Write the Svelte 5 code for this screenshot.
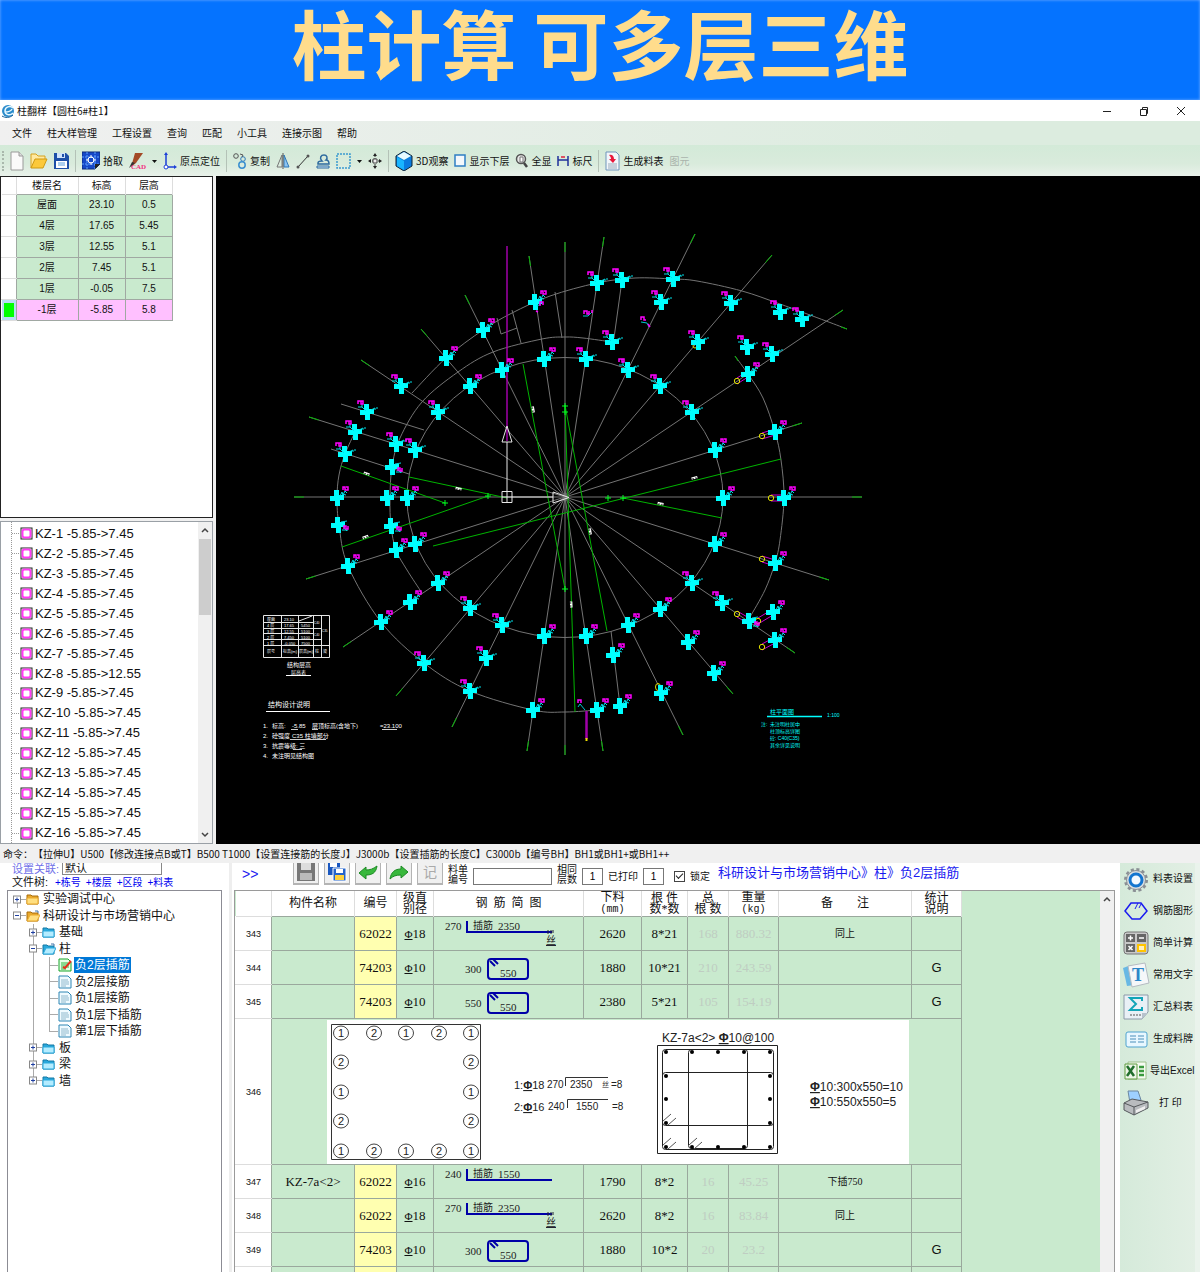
<script lang="ts">
    type Pt = [number, number];

    const menus = ['文件', '柱大样管理', '工程设置', '查询', '匹配', '小工具', '连接示图', '帮助'];

    const tools = [
        { icon: 'new', w: 14 },
        { icon: 'open', w: 18 },
        { icon: 'save', w: 15 },
        { icon: 'sep' },
        { icon: 'pick', w: 18, label: '拾取' },
        { icon: 'cad', w: 17 },
        { icon: 'caret', w: 5 },
        { icon: 'origin', w: 14, label: '原点定位' },
        { icon: 'sep' },
        { icon: 'copy', w: 14, label: '复制' },
        { icon: 'mirror', w: 14 },
        { icon: 'line', w: 14 },
        { icon: 'stamp', w: 14 },
        { icon: 'dash', w: 15 },
        { icon: 'caret', w: 5 },
        { icon: 'move', w: 14 },
        { icon: 'sep' },
        { icon: 'cube', w: 18, label: '3D观察' },
        { icon: 'box', w: 12, label: '显示下层' },
        { icon: 'zoom', w: 13, label: '全显' },
        { icon: 'ruler', w: 12, label: '标尺' },
        { icon: 'sep' },
        { icon: 'sheet', w: 15, label: '生成料表' },
        { icon: '', label: '图元', off: true }
    ];

    const floors = [
        ['屋面', '23.10', '0.5'],
        ['4层', '17.65', '5.45'],
        ['3层', '12.55', '5.1'],
        ['2层', '7.45', '5.1'],
        ['1层', '-0.05', '7.5'],
        ['-1层', '-5.85', '5.8']
    ];

    const columns = Array.from({ length: 16 }, (_, i) => `KZ-${i + 1} -5.85->${i === 7 ? '12.55' : '7.45'}`);

    const commands = [
        '命令：', '【拉伸U】', 'U500', '【修改连接点B或T】', 'B500 T1000', '【设置连接筋的长度J】', 'J3000b',
        '【设置插筋的长度C】', 'C3000b', '【编号BH】', 'BH1或BH1+或BH1++'
    ];

    const tree = [
        { d: 0, t: '实验调试中心', icon: 'folder', open: false },
        { d: 0, t: '科研设计与市场营销中心', icon: 'folder', open: true },
        { d: 1, t: '基础', icon: 'blue', open: false },
        { d: 1, t: '柱', icon: 'blue', open: true },
        { d: 2, t: '负2层插筋', icon: 'edit', open: false },
        { d: 2, t: '负2层接筋', icon: 'doc', open: false },
        { d: 2, t: '负1层接筋', icon: 'doc', open: false },
        { d: 2, t: '负1层下插筋', icon: 'doc', open: false },
        { d: 2, t: '第1层下插筋', icon: 'doc', open: false },
        { d: 1, t: '板', icon: 'blue', open: false },
        { d: 1, t: '梁', icon: 'blue', open: false },
        { d: 1, t: '墙', icon: 'blue', open: false }
    ];
    let selected = $state(4);
    let locked = $state(true);

    const rows = [
        { n: 343, name: '', code: '62022', dia: '18', a: '270', b: '2350', kind: 'L', thread: true, len: '2620', cnt: '8*21', sum: '168', kg: '880.32', note: '同上', g: '' },
        { n: 344, name: '', code: '74203', dia: '10', a: '300', b: '550', kind: 'O', len: '1880', cnt: '10*21', sum: '210', kg: '243.59', note: '', g: 'G' },
        { n: 345, name: '', code: '74203', dia: '10', a: '550', b: '550', kind: 'O', len: '2380', cnt: '5*21', sum: '105', kg: '154.19', note: '', g: 'G' },
        { n: 346, kind: 'pic' },
        { n: 347, name: 'KZ-7a<2>', code: '62022', dia: '16', a: '240', b: '1550', kind: 'L', len: '1790', cnt: '8*2', sum: '16', kg: '45.25', note: '下插750', g: '' },
        { n: 348, name: '', code: '62022', dia: '18', a: '270', b: '2350', kind: 'L', thread: true, len: '2620', cnt: '8*2', sum: '16', kg: '83.84', note: '同上', g: '' },
        { n: 349, name: '', code: '74203', dia: '10', a: '300', b: '550', kind: 'O', len: '1880', cnt: '10*2', sum: '20', kg: '23.2', note: '', g: 'G' },
        { n: '', name: '', code: '', dia: '', a: '', b: '', kind: 'O', len: '', cnt: '', sum: '', kg: '', note: '', g: '' }
    ];

    const side = [
        ['gear', '料表设置'], ['shape', '钢筋图形'], ['calc', '简单计算'], ['text', '常用文字'],
        ['sigma', '汇总料表'], ['card', '生成料牌'], ['excel', '导出Excel'], ['print', '打 印']
    ];

    // ---- drawing ----
    const cx = 565;
    const cy = 497;
    const rays: Pt[] = [
        [565, 242], [565, 755], [294, 497], [862, 497], [529, 256], [603, 751], [465, 295], [683, 735],
        [421, 329], [733, 694], [361, 360], [795, 653], [309, 417], [829, 580], [306, 579], [802, 423],
        [343, 647], [843, 310], [396, 696], [772, 255], [452, 727], [695, 234], [527, 751], [604, 237]
    ];
    function tip([x, y]: Pt): Pt {
        const l = Math.hypot(x - cx, y - cy);
        return [x - ((x - cx) / l) * 10, y - ((y - cy) / l) * 10];
    }

    // smooth curve through a list of points
    function curve(p: Pt[]) {
        let d = `M${p[0]}`;
        for (let i = 0; i < p.length - 1; i++) {
            const a = p[i - 1] ?? p[i], b = p[i], c = p[i + 1], e = p[i + 2] ?? c;
            d += `C${b[0] + (c[0] - a[0]) / 6},${b[1] + (c[1] - a[1]) / 6} ${c[0] - (e[0] - b[0]) / 6},${c[1] - (e[1] - b[1]) / 6} ${c}`;
        }
        return d;
    }
    const arcs: Pt[][] = [
        [[355, 432], [345, 454], [339, 475], [337, 498], [339, 525], [348, 566], [381, 622], [424, 663], [470, 691], [533, 710], [565, 712], [597, 710]],
        [[422, 593], [407, 570], [396, 550], [391, 526], [390, 498], [392, 467], [400, 438], [422, 402], [458, 372], [493, 352], [542, 339], [565, 337], [583, 338], [612, 342]],
        [[412, 393], [446, 358], [483, 330], [512, 313], [550, 296], [597, 283], [635, 278], [673, 279], [697, 281], [742, 291], [780, 304], [826, 321], [847, 329]],
        [[735, 356], [748, 374], [763, 398], [775, 432], [781, 460], [784, 498], [780, 540], [775, 563], [765, 590], [750, 617]]
    ];
    const grays = [
        [341, 404, 424, 430], [331, 449, 409, 474], [555, 292, 562, 338], [512, 310, 521, 343],
        [497, 318, 501, 334], [501, 334, 517, 328], [622, 280, 614, 338], [611, 631, 620, 706]
    ];
    const greens = [
        [523, 364, 565, 589], [565, 405, 607, 631], [565, 405, 575, 712], [341, 466, 445, 503],
        [409, 477, 507, 498], [342, 547, 488, 496], [433, 546, 781, 459], [623, 498, 722, 518],
        [735, 356, 738, 361], [841, 327, 847, 329]
    ];
    const plus: Pt[] = [[445, 503], [488, 496], [608, 498], [623, 498], [565, 406], [565, 412], [565, 589]];
    const marks: [number, number, number][] = [
        [367, 474, 20], [459, 489, 12], [533, 410, 80], [695, 478, -14], [661, 504, 12], [366, 537, -20], [571, 605, 88], [590, 532, 80]
    ];
    const ne: Pt[] = [
        [535, 302], [483, 330], [446, 358], [544, 359], [502, 370], [470, 386], [337, 498], [387, 498], [407, 498],
        [748, 374], [775, 432], [715, 450], [723, 498], [784, 498], [415, 544], [396, 550], [348, 566], [438, 583],
        [410, 602], [381, 622], [544, 636], [533, 710], [715, 544], [775, 563], [773, 612], [775, 640], [660, 609],
        [628, 625], [688, 642], [714, 673], [586, 636], [613, 655], [661, 693], [597, 710], [620, 706]
    ];
    const nw: Pt[] = [
        [401, 386], [438, 412], [367, 412], [355, 432], [345, 454], [396, 444], [415, 450], [597, 283], [622, 280],
        [673, 279], [661, 302], [731, 303], [780, 312], [802, 319], [612, 342], [698, 342], [747, 347], [772, 354],
        [586, 359], [628, 370], [660, 386], [692, 412], [470, 608], [502, 625], [424, 663], [486, 658], [470, 691],
        [692, 583], [722, 603]
    ];
    const se: Pt[] = [[392, 467], [338, 525], [391, 526], [749, 621]];
    const links = [
        [737, 381, 748, 374], [762, 436, 775, 432], [771, 498, 784, 498], [762, 559, 775, 563],
        [737, 614, 749, 621], [758, 621, 773, 612], [762, 647, 775, 640]
    ];
    const cross = 'M-3-8h5v5h5v5h-4v6h-5v-5h-5v-5h4z';

    const ringX = [340, 373, 405, 438, 470];
    const ringY = [1032, 1061, 1091, 1120, 1150];
    const dotX = [665, 691, 717, 743, 769];
    const dotY = [1051, 1075, 1098, 1122, 1146];
    const edge = [0, 1, 2, 3, 4].flatMap((i) => [0, 1, 2, 3, 4].map((j) => [i, j])).filter(([i, j]) => i % 4 === 0 || j % 4 === 0);
</script>

{#snippet toolIcon(name: string, w: number)}
    <svg width={w} height="20" viewBox="0 0 {w} 20" fill="none" aria-hidden="true">
        {#if name === 'new'}
            <path d="M1 1h8l4 4v14H1z" fill="#fafafa" stroke="#9a9a9a" /><path d="M9 1v4h4" stroke="#9a9a9a" fill="#ddd" />
        {:else if name === 'open'}
            <path d="M1 17V3h5l2 2h7v3" fill="#ffe9a0" stroke="#d6a21c" /><path d="M1 17 5 8h12l-4 9z" fill="#fcc93a" stroke="#cf9a12" />
        {:else if name === 'save'}
            <path d="M0 2h12l3 3v13H0z" fill="#1d4fa8" /><path d="M3 2h8v5H3z" fill="#cfe2fa" /><path d="M8 3h2v3H8z" fill="#1d4fa8" /><path d="M2 10h11v7H2z" fill="#fff" /><path d="M4 12h7M4 14h7" stroke="#5ba0e0" />
        {:else if name === 'pick'}
            <path d="M0 1h18v12l-5 5H0z" fill="#1648c8" stroke="#0b2a7a" /><path d="M0 6h18M0 13h18M5 1v17M13 1v17" stroke="#5ea2ff" stroke-dasharray="2 1" /><circle cx="9" cy="9" r="3" stroke="#fff" /><path d="M9 4v3M9 11v3M4 9h3M11 9h3" stroke="#fff" /><path d="M18 13h-5v5z" fill="#222" />
        {:else if name === 'cad'}
            <path d="M6 2h8L7 12l-5 4z" fill="#a34a26" /><path d="m0 17 3-6 3 1z" fill="#333" /><text x="2" y="18" font-size="7" class="cadword">CAD</text>
        {:else if name === 'caret'}
            <path d="M0 9h5l-2.500 3z" fill="#111" />
        {:else if name === 'origin'}
            <path d="M3 3v13h9" stroke="#1d3fd8" stroke-width="1.500" /><path d="m1 4 2-3 2 3zM11 14l3 2-3 2z" fill="#1d3fd8" /><circle cx="3" cy="16" r="2" fill="#fff" stroke="#1d3fd8" />
        {:else if name === 'copy'}
            <circle cx="3" cy="5" r="2.300" stroke="#555" /><circle cx="10" cy="8" r="2.300" stroke="#2d78b8" /><circle cx="9" cy="14" r="3.200" stroke="#3a8fd0" stroke-width="1.500" /><path d="M7 3l3 1-1 2" stroke="#555" />
        {:else if name === 'mirror'}
            <path d="M6 4v12H1z" stroke="#777" /><path d="M8 4v12h5z" fill="#8cc4f0" stroke="#2d78b8" /><path d="M7 2v16" stroke="#555" />
        {:else if name === 'line'}
            <path d="M2 16 12 5" stroke="#333" /><circle cx="2" cy="16" r="1.500" fill="#555" /><circle cx="12" cy="5" r="1.500" fill="#555" />
        {:else if name === 'stamp'}
            <path d="M1 15h12v2H1z" fill="#cfe6f8" stroke="#2d6a9e" /><path d="M2 12c0-2 2-2 4-2-3-3-1-6 2-6s4 3 2 5c3 0 3 3 3 4H2z" stroke="#2d6a9e" stroke-width="1.500" />
        {:else if name === 'dash'}
            <path d="M1 3h13v14H1z" stroke="#3b9bd0" stroke-width="1.500" stroke-dasharray="2 1" />
        {:else if name === 'move'}
            <path d="M7 4v12M1 10h12" stroke="#333" stroke-dasharray="2 1" /><path d="m5 5 2-3 2 3zM5 15l2 3 2-3zM3 8l-3 2 3 2zM11 8l3 2-3 2z" fill="#222" /><path d="M5 8h4v4H5z" stroke="#444" fill="#eee" />
        {:else if name === 'cube'}
            <path d="m9 0 8 5v10l-8 5-8-5V5z" fill="#0a7fd8" stroke="#123" /><path d="m9 1 7 4-7 4-7-4z" fill="#e6faff" /><path d="M2 6l7 4v9l-7-4z" fill="#19b5ff" /><path d="M16 6l-7 4v9l7-4z" fill="#0b7be0" />
        {:else if name === 'box'}
            <rect x="1" y="4" width="10" height="11" fill="#f4f8fc" stroke="#2f7fc4" stroke-width="1.500" />
        {:else if name === 'zoom'}
            <circle cx="6" cy="8" r="4.500" fill="#e8e8e8" stroke="#555" stroke-width="1.500" /><path d="M5 6h3v5H5z" fill="#fff" stroke="#777" /><path d="m9 12 3 4" stroke="#444" stroke-width="2.500" />
        {:else if name === 'ruler'}
            <path d="M1 5v10M11 5v10M1 9h10" stroke="#20309a" stroke-width="1.500" /><path d="M4 6h4" stroke="#e0203a" stroke-width="1.500" />
        {:else if name === 'sheet'}
            <path d="M1 1h10l3 3v15H1z" fill="#f2f6fa" stroke="#6f95bb" /><path d="M3 13h9M3 15h9M3 17h9" stroke="#9ab" /><path d="M4 4c3-1 5 1 5 4h2l-3 4-4-4h2c0-2-1-3-2-4z" fill="#e8173b" />
        {/if}
    </svg>
{/snippet}

{#snippet treeIcon(name: string, open: boolean)}
    <svg width="14" height="14" viewBox="0 0 14 14" fill="none" aria-hidden="true">
        {#if name === 'folder' || name === 'blue'}
            {@const c = name === 'folder' ? ['#e9a92c', '#ffdf80', '#a86c0a'] : ['#29a8dc', '#b4ecff', '#1478a4']}
            <path d="M1 12V3h4l1 1h6v8z" fill={c[0]} stroke={c[2]} />
            <path d={open ? 'M1 12l3-6h10l-3 6z' : 'M1 6h11v6H1z'} fill={c[1]} stroke={c[0]} />
            {#if open}<path d="M9 2h3v2" stroke="#47a" />{/if}
        {:else}
            <path d="M1 1h9l3 3v9H1z" fill={name === 'edit' ? '#e6ffe6' : '#effaff'} stroke={name === 'edit' ? '#19a52b' : '#2e86b4'} />
            <path d="M3 5h7M3 7h8M3 9h8M3 11h5" stroke={name === 'edit' ? '#2bb53b' : '#8fb8cc'} />
            {#if name === 'edit'}<path d="m5 9 2 1 6-7" stroke="#e4301c" stroke-width="2" />{/if}
        {/if}
    </svg>
{/snippet}

{#snippet sideIcon(name: string)}
    <svg width="28" height="26" viewBox="0 0 28 26" fill="none" aria-hidden="true">
        {#if name === 'gear'}
            <circle cx="14" cy="14" r="10.500" stroke="#8a8f94" stroke-width="3" stroke-dasharray="3 2.500" /><circle cx="14" cy="14" r="9.500" fill="#d9dde0" stroke="#8c9196" /><circle cx="14" cy="14" r="6" fill="#f4f9ff" stroke="#1475cf" stroke-width="3" />
        {:else if name === 'shape'}
            <path d="m3 13 6-8h10l6 8-7 8H10z" stroke="#1a1af0" stroke-width="1.500" /><path d="m13 11 3-6M17 10l2-4" stroke="#1a1af0" />
        {:else if name === 'calc'}
            <rect x="2" y="2" width="24" height="22" rx="3" fill="#c8c8c8" stroke="#777" /><path d="M4 4h9v8H4zM15 4h9v8h-9zM4 14h9v8H4z" fill="#666" /><path d="M15 14h9v8h-9z" fill="#ffc400" /><path d="M6 8h5M8.500 5.500v5M17 8h5M6.500 16l4 4M10.500 16l-4 4M17 17h5M17 19h5" stroke="#fff" stroke-width="1.500" />
        {:else if name === 'text'}
            <path d="m1 6 8-3 4 20-8 1z" fill="#68b8e4" /><path d="m6 4 17-3 4 20-17 4z" fill="#f5f7f9" stroke="#b5bcc2" /><text x="10" y="19" font-size="18" class="bigt">T</text>
        {:else if name === 'sigma'}
            <path d="M2 1h24v17l-6 7H2z" fill="#e9f0f6" stroke="#8c9aa8" /><path d="M20 25v-6h6z" fill="#b6c2cc" /><path d="M20 7V4H8l6 6-6 6h12v-3" stroke="#12a5b8" stroke-width="2" /><path d="M8 21h11" stroke="#555" stroke-dasharray="2 1" />
        {:else if name === 'card'}
            <rect x="4" y="6" width="21" height="15" rx="2" fill="#e8f7ff" stroke="#4ea3cf" /><path d="M8 10h6M16 10h6M8 13h6M16 13h6M8 16h6M16 16h6" stroke="#4b8fba" />
        {:else if name === 'excel'}
            <path d="M6 4h18v17H6z" fill="#f6fbf2" stroke="#9cc08a" /><path d="M3 6h12v15H3z" fill="#eef6e8" stroke="#5f9c3e" /><path d="m5 8 7 10M12 8 5 18" stroke="#206e2c" stroke-width="2.500" /><path d="M17 9h5M17 13h5M17 17h5" stroke="#3a9a3e" stroke-width="2.500" />
        {:else}
            <path d="M6 1h10l3 9-11 3z" fill="#9ed0ff" stroke="#6d87a0" /><path d="m2 13 8-4 16 3v6l-14 7-10-5z" fill="#b9bcbf" stroke="#55595c" /><path d="m2 13 10 4 14-5M12 17v8" stroke="#55595c" /><path d="m14 20 9-4v3l-9 4z" fill="#eee" />
        {/if}
    </svg>
{/snippet}

{#snippet arrow(up: boolean)}
    <svg width="8" height="6" viewBox="0 0 8 6" fill="none" aria-hidden="true"><path d={up ? 'M1 5l3-3 3 3' : 'M1 1l3 3 3-3'} stroke="#444" stroke-width="1.500" /></svg>
{/snippet}

<div class="page">
    <h1 class="banner">柱计算 可多层三维</h1>

    <header class="titlebar">
        <svg width="14" height="14" viewBox="0 0 14 14" fill="none" aria-hidden="true"><circle cx="7" cy="7" r="6" fill="#2b8ccc" /><path d="M12 4c-3-3-8-1-8 3s5 5 8 2M4 8c3 0 6-1 7-3" stroke="#e8f8ff" stroke-width="1.500" /><path d="M1 12c3 2 8 2 11-1" stroke="#0c5a94" /></svg>
        <span class="title">柱翻样【圆柱6#柱1】</span>
        <div class="win">
            <button aria-label="最小化"><svg width="10" height="10" fill="none"><path d="M1 5.500h8" stroke="#222" /></svg></button>
            <button aria-label="还原"><svg width="10" height="10" fill="none"><path d="M1.500 3.500h6v6h-6zM3.500 3V1.500h5v6H8" stroke="#222" /></svg></button>
            <button aria-label="关闭"><svg width="10" height="10" fill="none"><path d="m1 1 8 8M9 1 1 9" stroke="#222" /></svg></button>
        </div>
    </header>

    <nav class="menubar">
        {#each menus as m}<button>{m}</button>{/each}
    </nav>

    <div class="toolbar">
        <i class="grip"></i>
        {#each tools as t}
            {#if t.icon === 'sep'}
                <i class="sep"></i>
            {:else}
                <button class:off={t.off} aria-label={t.label ?? t.icon}>
                    {#if t.w}{@render toolIcon(t.icon, t.w)}{/if}
                    {#if t.label}<span>{t.label}</span>{/if}
                </button>
            {/if}
        {/each}
    </div>

    <div class="work">
        <aside class="left">
            <div class="floors">
                <table>
                    <thead><tr><th></th><th>楼层名</th><th>标高</th><th>层高</th></tr></thead>
                    <tbody>
                        {#each floors as f, i}
                            <tr class:current={i === 5}><td class="mark"></td><td>{f[0]}</td><td>{f[1]}</td><td>{f[2]}</td></tr>
                        {/each}
                    </tbody>
                </table>
            </div>
            <div class="columns">
                <ul>
                    {#each columns as c}
                        <li>
                            <svg width="22" height="13" viewBox="0 0 22 13" fill="none" aria-hidden="true"><path d="M0 6.500h8" stroke="#999" stroke-dasharray="1 1" /><rect x="9" y="1" width="11" height="11" fill="#fff" stroke="#222" /><rect x="10.500" y="2.500" width="8" height="8" rx="2" stroke="#ff3cf4" stroke-width="2" fill="#fff" /></svg>
                            <span>{c}</span>
                        </li>
                    {/each}
                </ul>
                <div class="scroll">
                    {@render arrow(true)}
                    <i class="thumb"></i>
                    {@render arrow(false)}
                </div>
            </div>
        </aside>

        <main class="canvas">
            <svg viewBox="216 176 984 668" fill="none" role="img" aria-label="柱平面图">
                <g stroke="#747474">
                    {#each rays as r}<path d="M{cx} {cy}L{r}" />{/each}
                    {#each arcs as a}<path d={curve(a)} />{/each}
                    <ellipse cx="565" cy="497.500" rx="158" ry="140" />
                    {#each grays as l}<path d="M{l[0]} {l[1]}L{l[2]} {l[3]}" />{/each}
                </g>
                <g stroke="#00b400">
                    {#each rays as r}<path d="M{tip(r)}L{r}" />{/each}
                    {#each greens as l}<path d="M{l[0]} {l[1]}L{l[2]} {l[3]}" />{/each}
                    {#each plus as p}<path d="M{p[0] - 3} {p[1]}h6m-3-3v6" stroke="#00ff20" />{/each}
                </g>
                {#each marks as m}
                    <path d="M-3 1v-2h2v2m1 0v-2h2v2" transform="translate({m[0]} {m[1]}) rotate({m[2]})" stroke="#fff" />
                {/each}

                <path d="M507 246v195" stroke="#a000a8" stroke-width="1.500" />
                <path d="M507 442v49m5 6h41M507 426l-5 16h10zM502 491.500h10v11h-10zM553 492v11l16-5.500zM507 491v12m-5-6h10" stroke="#e8e8e8" />

                {#each links as l}
                    <path d="M{l[0]} {l[1] - 3}L{l[2]} {l[3] - 3}M{l[0]} {l[1] + 3}L{l[2]} {l[3] + 3}" stroke="#c800d0" />
                    <circle cx={l[0]} cy={l[1]} r="2.700" stroke="#e0e000" />
                {/each}
                <circle cx="695" cy="346" r="2" stroke="#e0e000" />
                <ellipse cx="658" cy="687" rx="2.500" ry="3.500" stroke="#e0e000" />
                <path d="M586.500 711v28" stroke="#a000a8" stroke-width="2.500" /><path d="M586.500 738v3" stroke="#f0e000" stroke-width="2" />

                {#each ne as p}
                    <g transform="translate({p})">
                        <path d={cross} fill="#00ffff" /><path d="m3-2 2-4 1 3 2-4 2 2M5-4l4 1" stroke="#00e0e8" /><path d="M6-8v-3h2v3h3v-3H9" stroke="#ff00ff" stroke-width="1.500" />
                    </g>
                {/each}
                {#each nw as p}
                    <g transform="translate({p})">
                        <path d={cross} fill="#00ffff" /><path d="m-9-5h4v-3m0 3 4 4M4-2l4-2v2m1-2h2" stroke="#00e0e8" /><path d="M-9-8v-3h3v3h2v-3h-2" stroke="#ff00ff" stroke-width="1.500" />
                    </g>
                {/each}
                {#each se as p}
                    <g transform="translate({p})">
                        <path d={cross} fill="#00ffff" /><path d="m3-3 6-1M4 5h6M5 1l4 5" stroke="#00e0e8" /><path d="M6 4V1h2v3h2V1" stroke="#ff00ff" stroke-width="1.500" />
                    </g>
                {/each}
                <path d="M583 316h5l4-4M641 322l6 1 2 4M578 707l2-3 5 6M537 306l4-2" stroke="#00c8d0" />
                <path d="M584 314v-3h3v3h2v-3M641 320v-3h3v3h2M648 324l2 3M578 703v-3h3v3M540 306v-4h3v3M536 311l2 1M592 313v-3" stroke="#ff00ff" stroke-width="1.500" />

                <!-- floor schedule -->
                <path d="M263.500 615.500h66v42h-66zM281.500 615v42M298.500 615v42M313.500 615v42M321.500 615v42M263 622.500h50M263 628.500h50M263 633.500h50M263 639.500h50M263 645.500h66M313 628.500h8M313 639.500h8M299 621l13-5" stroke="#e6e6e6" />
                <g fill="#fff" font-size="4">
                    {#each [0, 1, 2, 3, 4] as i}
                        <text x="267" y={621 + i * 6}>{['屋面', '4 层', '3 层', '2 层', '1 层'][i]}</text>
                        <text x="284" y={621 + i * 6}>{['23.10', '17.65', '12.55', '7.450', '-0.050'][i]}</text>
                        {#if i}<text x="301" y={621 + i * 6}>{['', '5450', '5100', '5100', '7500'][i]}</text>{/if}
                    {/each}
                    <text x="267" y="653">层号</text><text x="283" y="653">标高(m)</text><text x="299" y="653">层高(m)</text>
                    <text x="314" y="624" font-size="3">C40</text><text x="314" y="636" font-size="3">C40</text><text x="322" y="632" font-size="3">C35</text><text x="315" y="653">柱</text><text x="323" y="653">梁</text>
                    <text x="287" y="667" font-size="6">结构层高</text><text x="291" y="674" font-size="5">层高表</text>
                    <text x="268" y="707" font-size="7">结构设计说明</text>
                    <g font-size="6">
                        <text x="263" y="728">1.</text><text x="272" y="728">标高:</text><text x="292" y="728">-5.85</text><text x="312" y="728">层顶标高(含地下)</text><text x="380" y="728">=23.100</text>
                        <text x="263" y="738">2.</text><text x="272" y="738">砼强度</text><text x="292" y="738">C35 柱墙部分</text>
                        <text x="263" y="748">3.</text><text x="272" y="748">抗震等级: 三</text>
                        <text x="263" y="758">4.</text><text x="272" y="758">未注明见结构图</text>
                    </g>
                </g>
                <path d="M286 675.500h25M266 711.500h64" stroke="#fff" /><path d="M291 729.500h7M312 729.500h6M382 729.500h15M290 739.500h36M293 749.500h9" stroke="#ccc" />
                <g fill="#00ffff" font-size="5">
                    <text x="770" y="714" font-size="6">柱平面图</text><text x="827" y="717">1:100</text>
                    <text x="761" y="726">注:</text><text x="770" y="726">未注明柱居中</text><text x="770" y="733">柱顶标高详图</text>
                    <text x="770" y="740">砼: C40(C35)</text><text x="770" y="747">其余详见说明</text>
                </g>
                <path d="M767 716.500h55" stroke="#00ffff" stroke-width="1.500" />
            </svg>
        </main>
    </div>

    <div class="status">{#each commands as c}<span>{c}</span>{/each}</div>

    <div class="bottom">
        <aside class="files">
            <div class="assoc">
                <label for="assoc">设置关联:</label>
                <select id="assoc"><option>默认</option></select>
            </div>
            <div class="levels">
                <span>文件树:</span>
                {#each ['栋号', '楼层', '区段', '料表'] as l}<button>+{l}</button>{/each}
            </div>
            <div class="treebox">
                <ul class="tree">
                    {#each tree as n, i}
                        {@const x = n.d * 16 + 9}
                        <li>
                            <svg width={x + 9} height="17" viewBox="0 0 {x + 9} 17" fill="none" aria-hidden="true">
                                {#if i === 0 || n.d > 0}<path d="M{x + .5} {i === 0 ? 9 : 0}V{i === 8 || i === 11 ? 9 : 17}" stroke="#aaa" />{/if}
                                {#if n.d === 2}<path d="M25.500 0v17" stroke="#aaa" />{/if}
                                <path d="M{x} 8.500h9" stroke="#aaa" />
                                {#if n.d < 2}
                                    <rect x={x - 3.5} y="5" width="7" height="7" fill="#fff" stroke="#888" />
                                    <path d={n.open ? `M${x - 2} 8.500h4` : `M${x - 2} 8.500h4m-2-2v4`} stroke="#2040a0" />
                                {/if}
                            </svg>
                            {@render treeIcon(n.icon, n.open)}
                            <button class:selected={selected === i} onclick={() => (selected = i)}>{n.t}</button>
                        </li>
                    {/each}
                </ul>
            </div>
        </aside>

        <section class="sheet">
            <div class="actions">
                <button class="more">&gt;&gt;</button>
                <button class="act" aria-label="保存"><svg width="20" height="20" fill="none"><path d="M1 1h18v18H1z" fill="#777" /><path d="M5 1h10v7H5z" fill="#ddd" /><path d="M4 11h12v7H4z" fill="#bbb" /></svg></button>
                <button class="act" aria-label="全部保存"><svg width="20" height="20" fill="none"><path d="M1 1h12v12H1z" fill="#1b58c0" /><path d="M3 1h7v4H3z" fill="#fff" /><path d="M6 6h13v13H6z" fill="#2464cc" stroke="#fff" /><path d="M9 7h7v4H9z" fill="#fff" /><path d="M8 13h9v5H8z" fill="#ffd23c" /></svg></button>
                <button class="act" aria-label="撤销"><svg width="20" height="20" fill="none"><path d="m1 11 7-6v3c4 0 7-1 11-4-1 7-5 9-11 9v4z" fill="#38b83c" stroke="#1c8a24" /></svg></button>
                <button class="act" aria-label="重做"><svg width="20" height="20" fill="none"><path d="m19 10-7-6v3C6 7 2 10 1 17c3-3 6-4 11-4v3z" fill="#38b83c" stroke="#1c8a24" /></svg></button>
                <button class="act memo">记</button>
                <label class="two" for="no">料单<br />编号</label>
                <input id="no" class="long" />
                <label class="two" for="same">相同<br />层数</label>
                <input id="same" value="1" />
                <label class="one" for="printed">已打印</label>
                <input id="printed" value="1" />
                <input id="lock" type="checkbox" bind:checked={locked} />
                <label class="one" for="lock">锁定</label>
                <span class="crumb">科研设计与市场营销中心》柱》负2层插筋</span>
            </div>
            <div class="gridwrap">
                <div class="gridarea">
                    <table class="grid">
                        <colgroup>
                            {#each ['c36', 'c83', 'c42', 'c37', 'c150', 'c58', 'c46', 'c41', 'c50', 'c133', 'c50'] as c}<col class={c} />{/each}
                        </colgroup>
                        <thead>
                            <tr>
                                <th></th><th>构件名称</th><th>编号</th><th>级直<br />别径</th><th>钢&ensp;筋&ensp;简&ensp;图</th>
                                <th>下料<br /><small>(mm)</small></th><th>根 件<br />数*数</th><th>总<br />根 数</th>
                                <th>重量<br /><small>(kg)</small></th><th>备　　注</th><th>统计<br />说明</th>
                            </tr>
                        </thead>
                        <tbody>
                            {#each rows as r}
                                {#if r.kind === 'pic'}
                                    <tr class="pic">
                                        <td class="no">{r.n}</td>
                                        <td colspan="10">
                                            <svg width="690" height="144" viewBox="271 1019 690 144" fill="none">
                                                <path d="M326 1019h582v144H326z" fill="#fff" />
                                                <path d="M330.500 1023.500h149v135h-149z" stroke="#333" />
                                                {#each edge as [i, j]}
                                                    <ellipse cx={ringX[i]} cy={ringY[j]} rx="7.500" ry="7" stroke="#444" />
                                                    <text x={ringX[i]} y={ringY[j] + 4} font-size="11" text-anchor="middle">{(i + j) % 2 ? 2 : 1}</text>
                                                {/each}
                                                <g font-size="11">
                                                    <text x="513" y="1088">1:<tspan class="phi">Φ</tspan>18</text><text x="546" y="1087" font-size="10">270</text><text x="569" y="1087" font-size="10">2350</text><text x="610" y="1087" font-size="10">=8</text>
                                                    <text x="513" y="1110">2:<tspan class="phi">Φ</tspan>16</text><text x="547" y="1109" font-size="10">240</text><text x="575" y="1109" font-size="10">1550</text><text x="611" y="1109" font-size="10">=8</text>
                                                    <text x="601" y="1086" font-size="7">丝</text>
                                                </g>
                                                <path d="M564.500 1085v-8.500H607M566.500 1107v-8.500H607" stroke="#333" />
                                                <text x="661" y="1041" font-size="12">KZ-7a&lt;2&gt; <tspan class="phi">Φ</tspan>10@100</text>
                                                <text x="809" y="1090" font-size="12"><tspan class="phi">Φ</tspan>10:300x550=10</text>
                                                <text x="809" y="1105" font-size="12"><tspan class="phi">Φ</tspan>10:550x550=5</text>
                                                <g stroke="#222">
                                                    <path d="M656.500 1044.500h120v108h-120z" />
                                                    <rect x="661.500" y="1048.500" width="111" height="100" rx="3" />
                                                    <rect x="661.500" y="1071.500" width="111" height="53" rx="3" />
                                                    <rect x="687.500" y="1048.500" width="59" height="99" rx="3" />
                                                    <path d="m662 1120 8-7m-3 11 8-7M662 1144l8-7m-3 11 8-7M688 1144l8-7m-3 11 8-7" stroke="#555" />
                                                </g>
                                                {#each edge as [i, j]}<circle cx={dotX[i]} cy={dotY[j]} r="2" fill="#000" />{/each}
                                            </svg>
                                        </td>
                                    </tr>
                                {:else}
                                    <tr>
                                        <td class="no">{r.n}</td><td>{r.name}</td><td class="code">{r.code}</td>
                                        <td class="dia">{#if r.dia}<u>Φ</u>{r.dia}{/if}</td>
                                        <td class="bar">
                                            <svg width="148" height="32" viewBox="1 1 148 32" fill="none">
                                                {#if r.kind === 'L'}
                                                    <text x="12" y="13">{r.a}</text><text x="40" y="12" class="cjk">插筋</text><text x="65" y="13">{r.b}</text>
                                                    <path d="M34 4v11h85" stroke="#0000a8" stroke-width="2" />
                                                    {#if r.thread}<path d="M115 13v4m3-4v4m2-4v3" stroke="#223" /><text x="113" y="27" class="cjk">丝</text><path d="M113 28.500h10" stroke="#223" />{/if}
                                                {:else}
                                                    <text x="32" y="22">{r.a}</text><text x="67" y="26">{r.b}</text>
                                                    <rect x="55" y="8" width="40" height="20" rx="3" stroke="#0000a8" stroke-width="2" />
                                                    <path d="m57 10 5 5M60 8l5 5" stroke="#0000a8" stroke-width="2" />
                                                {/if}
                                            </svg>
                                        </td>
                                        <td>{r.len}</td><td>{r.cnt}</td><td class="dim">{r.sum}</td><td class="dim">{r.kg}</td>
                                        <td class="note">{r.note}</td><td class="g">{r.g}</td>
                                    </tr>
                                {/if}
                            {/each}
                        </tbody>
                    </table>
                </div>
                <div class="scroll">{@render arrow(true)}</div>
            </div>
        </section>

        <nav class="side">
            {#each side as s}
                <button>{@render sideIcon(s[0])}<span>{s[1]}</span></button>
            {/each}
        </nav>
    </div>
</div>

<style>
    :global(body) {
        margin: 0;
    }
    .page {
        display: flex;
        flex-direction: column;
        height: 100vh;
        overflow: hidden;
        background: #f0f0f0;
        color: #111;
        font: 10px/14px "Liberation Sans", "Noto Sans CJK SC", sans-serif;
    }
    button {
        padding: 0;
        border: 0;
        background: none;
        color: inherit;
        font: inherit;
        white-space: nowrap;
    }
    svg {
        flex: none;
        display: block;
    }
    ul {
        margin: 0;
        padding: 0;
        list-style: none;
    }
    .banner {
        flex: none;
        height: 100px;
        margin: 0;
        box-sizing: border-box;
        background: #0573ff;
        box-shadow: inset 0 0 3px #7db4ff;
        color: #ffdc8c;
        font: 700 75px/84px "Noto Sans CJK SC", sans-serif;
        text-align: center;
    }
    .titlebar {
        flex: none;
        display: flex;
        align-items: center;
        gap: 2px;
        height: 21px;
        padding-left: 1px;
        background: #fff;
    }
    .title,
    .menubar,
    .toolbar,
    .status {
        font-family: "Noto Sans CJK SC", sans-serif;
    }
    .win {
        display: flex;
        gap: 27px;
        margin-left: auto;
        padding-right: 14px;
    }
    .menubar {
        flex: none;
        display: flex;
        gap: 15px;
        height: 24px;
        padding-left: 12px;
        background: linear-gradient(90deg, #f0f0f0, #dcecdf 80%);
    }
    .toolbar {
        flex: none;
        display: flex;
        align-items: center;
        gap: 6px;
        height: 31px;
        padding-left: 2px;
        background: linear-gradient(#d3ead8, #d9ebdc 60%, #e9f1ea);
    }
    .toolbar button {
        display: flex;
        align-items: center;
        gap: 3px;
    }
    .toolbar .off {
        color: #aab4ac;
    }
    .grip {
        height: 20px;
        border-left: 2px dotted #a9b8ac;
    }
    .sep {
        height: 22px;
        border-left: 1px solid #b4c2b7;
    }
    .cadword {
        fill: #f0307c;
        font-family: "Liberation Serif", serif;
        font-weight: 700;
    }
    .bigt {
        fill: #2d86c8;
        font-family: "Liberation Serif", serif;
        font-weight: 700;
    }
    .work {
        flex: none;
        display: flex;
        gap: 3px;
        height: 668px;
    }
    .left {
        flex: none;
        display: flex;
        flex-direction: column;
        gap: 3px;
        width: 213px;
    }
    .floors {
        height: 340px;
        border: 1px solid #222;
        background: #fff;
    }
    .floors table {
        width: 172px;
        border-collapse: collapse;
        table-layout: fixed;
        text-align: center;
    }
    .floors th {
        height: 17px;
        padding: 0;
        border-right: 1px solid #ddd;
        font-weight: 400;
    }
    .floors th:first-child {
        width: 14px;
    }
    .floors th:nth-child(2) {
        width: 61px;
    }
    .floors td {
        height: 20px;
        padding: 0;
        border: 1px solid #a0a8a2;
        background: #c9eace;
    }
    .floors .mark {
        border-color: #ddd #a0a8a2 #ddd #fff;
        background: #fff;
    }
    .floors .current td {
        background: #ffc0ff;
    }
    .floors .current .mark {
        background: linear-gradient(#00ff00, #00ff00) center / 10px 14px no-repeat #b8dcf4;
    }
    .columns {
        flex: 1;
        display: flex;
        min-height: 0;
        border: 1px solid #9aa0a6;
        background: #fff;
        font-size: 13px;
        overflow: hidden;
    }
    .columns ul {
        flex: 1;
        display: grid;
        grid-auto-rows: 1fr;
        height: 321px;
        margin-left: 10px;
        padding-top: 2px;
        box-sizing: border-box;
        border-left: 1px dotted #999;
    }
    .columns li {
        display: flex;
        align-items: center;
        gap: 1px;
        min-height: 0;
        white-space: pre;
    }
    .scroll {
        flex: none;
        display: flex;
        flex-direction: column;
        align-items: center;
        width: 14px;
        padding: 5px 0;
        box-sizing: border-box;
        background: #f0f0f0;
    }
    .thumb {
        width: 12px;
        height: 76px;
        margin: 6px 0 auto;
        background: #cdcdcd;
    }
    .canvas {
        flex: 1;
        min-width: 0;
        background: #000;
    }
    .canvas svg {
        width: 100%;
        height: 100%;
    }
    .status {
        flex: none;
        display: flex;
        align-items: center;
        height: 19px;
        padding: 1px 3px 0;
        box-sizing: border-box;
        background: #f0f0f0;
        white-space: pre;
    }
    .bottom {
        flex: 1;
        display: flex;
        min-height: 0;
        background: #fff;
    }
    .files {
        flex: none;
        display: flex;
        flex-direction: column;
        width: 229px;
        border-right: 3px solid #eee;
        font-size: 11px;
    }
    .assoc {
        flex: none;
        display: flex;
        align-items: flex-end;
        gap: 3px;
        height: 12px;
        overflow: hidden;
        padding-left: 12px;
        color: #7070e8;
        white-space: nowrap;
    }
    .assoc label {
        width: 47px;
        line-height: 12px;
    }
    .assoc select {
        appearance: none;
        width: 100px;
        height: 14px;
        padding: 0 2px;
        border: 1px solid #888;
        border-top: 0;
        background: #fff;
        color: #111;
        font: 11px/12px "Liberation Sans", "Noto Sans CJK SC", sans-serif;
    }
    .levels {
        flex: none;
        display: flex;
        gap: 5px;
        height: 15px;
        padding-left: 12px;
    }
    .levels span {
        width: 38px;
    }
    .levels button {
        color: #0000f0;
        font-size: 10px;
    }
    .treebox {
        flex: 1;
        margin: 0 7px;
        border: 1px solid #8c8c94;
        border-bottom: 0;
    }
    .tree {
        display: grid;
        grid-auto-rows: 1fr;
        height: 198px;
        font-size: 12px;
    }
    .tree li {
        display: flex;
        align-items: center;
        min-height: 0;
    }
    .tree button {
        margin-left: 2px;
        padding: 0 1px;
        line-height: 16px;
    }
    .tree .selected {
        background: #0078d7;
        color: #fff;
    }
    .sheet {
        flex: 1;
        display: flex;
        flex-direction: column;
        min-width: 0;
    }
    .actions {
        flex: none;
        display: flex;
        align-items: flex-end;
        gap: 5px;
        height: 27px;
        padding: 0 0 5px 10px;
        box-sizing: border-box;
        overflow: hidden;
    }
    .more {
        width: 46px;
        color: #2020f0;
        font-size: 14px;
        line-height: 22px;
        text-align: left;
    }
    .act {
        display: grid;
        place-items: center;
        width: 26px;
        height: 26px;
        box-sizing: border-box;
        border: 1px solid #b4b4b4;
        border-bottom-width: 2px;
        background: #f0f0f0;
    }
    .memo {
        color: #aaa;
        font-size: 14px;
    }
    .two {
        width: 20px;
        line-height: 10px;
    }
    .one {
        line-height: 16px;
    }
    .actions input {
        width: 21px;
        height: 17px;
        margin: 0;
        padding: 0;
        box-sizing: border-box;
        border: 1px solid #777;
        background: #fff;
        font: inherit;
        text-align: center;
    }
    .actions .long {
        width: 79px;
    }
    .actions input[type="checkbox"] {
        appearance: none;
        width: 11px;
        height: 11px;
        margin: 0 0 3px 5px;
        border: 1px solid #444;
    }
    .actions input:checked::after {
        content: "";
        display: block;
        width: 6px;
        height: 3px;
        margin: 1px;
        border: solid #222;
        border-width: 0 0 1px 1px;
        transform: rotate(-45deg);
    }
    .crumb {
        margin-left: 3px;
        padding-bottom: 3px;
        color: #1818f0;
        font-size: 13px;
        line-height: 18px;
        white-space: nowrap;
    }
    .gridwrap {
        flex: 1;
        display: flex;
        min-height: 0;
        margin-left: 2px;
        border: solid #9a9a9a;
        border-width: 1px 1px 0;
        overflow: hidden;
    }
    .gridarea {
        flex: 1;
        background: #c9eace;
    }
    .grid {
        width: 726px;
        border-collapse: collapse;
        table-layout: fixed;
        font: 13px/16px "Liberation Serif", "Noto Sans CJK SC", serif;
        text-align: center;
    }
    .c36 { width: 36px; }
    .c37 { width: 37px; }
    .c41 { width: 41px; }
    .c42 { width: 42px; }
    .c46 { width: 46px; }
    .c50 { width: 50px; }
    .c58 { width: 58px; }
    .c83 { width: 83px; }
    .c133 { width: 133px; }
    .c150 { width: 150px; }
    .grid th {
        height: 25px;
        padding: 0;
        border-right: 1px solid #ddd;
        background: #fff;
        font-size: 12px;
        font-weight: 400;
        line-height: 11px;
        white-space: nowrap;
    }
    .grid small {
        font: 10px/10px "Liberation Mono", monospace;
    }
    .grid td {
        height: 33px;
        padding: 0;
        border: 1px solid #9aa89d;
    }
    .grid .pic td {
        height: 145px;
    }
    .grid .no {
        border-color: #ddd #9aa89d #ddd #fff;
        background: #fff;
        font: 9px/12px "Liberation Sans", sans-serif;
    }
    .grid .code {
        background: #ffffb0;
    }
    .dia u {
        font-size: 11px;
    }
    .grid .dim {
        color: #bfcdc2;
    }
    .grid .note {
        font-size: 10px;
    }
    .grid .g {
        font-family: "Liberation Sans", sans-serif;
    }
    .bar text {
        fill: #222;
        font: 11px "Liberation Serif", serif;
    }
    .bar .cjk {
        font: 10px "Noto Sans CJK SC", sans-serif;
    }
    .pic text {
        fill: #222;
        font-family: "Liberation Sans", "Noto Sans CJK SC", sans-serif;
    }
    .phi {
        font-weight: 700;
        text-decoration: underline;
    }
    .side {
        flex: none;
        display: grid;
        grid-template-rows: repeat(8, 32px);
        align-content: start;
        width: 75px;
        margin-left: 5px;
        border-right: 5px solid #eaf3ec;
        background: linear-gradient(90deg, #d5eada, #e2efe4);
    }
    .side button {
        display: flex;
        align-items: center;
        gap: 3px;
        padding-left: 2px;
        text-align: left;
    }
    .side button:nth-child(7) {
        gap: 0;
    }
    .side button:last-child span {
        padding-left: 6px;
    }
</style>
